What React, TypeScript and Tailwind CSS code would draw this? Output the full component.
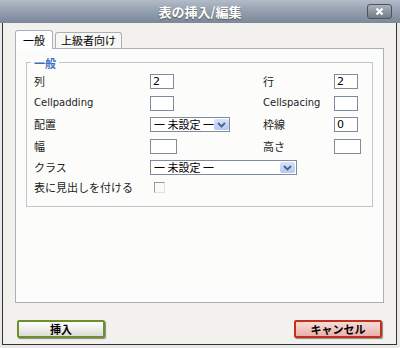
const jp = { fontFamily: '"Noto Sans CJK JP", "Noto Sans", sans-serif' };
const latin = { fontFamily: '"DejaVu Sans", "Liberation Sans", sans-serif' };

function TextBox({ value = "", w = "w-[24px]" }: { value?: string; w?: string }) {
  return (
    <div
      className={`${w} h-[15px] border border-[#7f8b98] bg-white text-[11px] leading-[13px] pl-[2px] text-black`}
      style={latin}
    >
      {value}
    </div>
  );
}

function Select({ w }: { w: string }) {
  return (
    <div className={`${w} h-[15px] border border-[#7f8b98] bg-white flex items-center justify-between overflow-hidden`}>
      <span className="text-[11px] leading-[13px] pl-[3px] text-black whitespace-nowrap" style={jp}>
        一 未設定 一
      </span>
      <span className="shrink-0 w-[15px] h-[11px] mr-[1px] rounded-[2px] bg-gradient-to-b from-[#d7e2fb] to-[#b4c8f4] flex items-center justify-center">
        <svg width="9" height="6" viewBox="0 0 9 6">
          <path d="M1 1 L4.5 4.5 L8 1" fill="none" stroke="#4d6185" strokeWidth="1.8" />
        </svg>
      </span>
    </div>
  );
}

function Label({ children, latinText }: { children: React.ReactNode; latinText?: boolean }) {
  return (
    <span
      className={`${latinText ? "text-[10px]" : "text-[11px]"} text-[#222] leading-none`}
      style={latinText ? latin : jp}
    >
      {children}
    </span>
  );
}

export default function App() {
  return (
    <div className="w-[400px] h-[348px] bg-[#e9e9e9] flex flex-col">
      <div className="h-[23px] bg-gradient-to-b from-[#b3bcc8] via-[#939faf] to-[#7b8899] flex items-center justify-center relative">
        <span
          className="text-white font-bold text-[13px] [text-shadow:0_1px_1px_#555]"
          style={jp}
        >
          表の挿入/編集
        </span>
        <div className="absolute right-[8px] top-[4px] w-[25px] h-[15px] rounded-[3px] border border-[#4a5560] bg-gradient-to-b from-[#aab2bc] to-[#727d89] flex items-center justify-center">
          <svg width="9" height="9" viewBox="0 0 9 9">
            <path d="M1.5 1.5 L7.5 7.5 M7.5 1.5 L1.5 7.5" stroke="white" strokeWidth="2.2" />
          </svg>
        </div>
      </div>
      <div className="flex-1 ml-[2px] mr-[3px] mb-[3px] border-l border-r border-b border-[#333] bg-[#f2f1ed] flex flex-col px-[12px] pt-[7px]">
        <div className="flex items-end h-[18px] relative z-10">
          <div
            className="h-[19px] w-[38px] bg-white border border-[#a6b1bc] border-b-0 rounded-t-[3px] text-[11px] flex items-center justify-center text-black mb-[-1px]"
            style={jp}
          >
            一般
          </div>
          <div
            className="h-[16px] w-[67px] ml-[2px] bg-[#f7f7f4] border border-[#a6b1bc] border-b-0 rounded-t-[3px] text-[11px] flex items-center justify-center text-black"
            style={jp}
          >
            上級者向け
          </div>
        </div>
        <div className="h-[255px] bg-[#fcfdfb] border border-[#a6b1bc] px-[10px] pt-[6px]">
          <div className="relative border border-[#c3c6c9] h-[145px] mt-[7px] px-[7px] pt-[11px]">
            <span
              className="absolute left-[4px] top-[-8px] bg-[#fcfdfb] px-[3px] text-[11px] font-bold text-[#3f6fc4]"
              style={jp}
            >
              一般
            </span>
            <div className="grid grid-cols-[116px_113px_71px_auto] gap-y-[6.5px] items-center">
              <Label>列</Label>
              <TextBox value="2" />
              <Label>行</Label>
              <TextBox value="2" />

              <Label latinText>Cellpadding</Label>
              <TextBox />
              <Label latinText>Cellspacing</Label>
              <TextBox />

              <Label>配置</Label>
              <Select w="w-[80px]" />
              <Label>枠線</Label>
              <TextBox value="0" />

              <Label>幅</Label>
              <TextBox w="w-[27px]" />
              <Label>高さ</Label>
              <TextBox w="w-[27px]" />

              <Label>クラス</Label>
              <div className="col-span-3">
                <Select w="w-[147px]" />
              </div>

              <Label>表に見出しを付ける</Label>
              <div className="col-span-3 pl-[4px]">
                <div className="w-[11px] h-[11px] border-t border-l border-[#999] border-r border-b border-r-[#e0e0e0] border-b-[#e0e0e0] bg-[#fafafa]" />
              </div>
            </div>
          </div>
        </div>
        <div className="flex justify-between mt-[17px] px-[2px]">
          <div
            className="w-[88px] h-[18px] rounded-[2px] border-2 border-[#6f8f2c] bg-gradient-to-b from-[#ffffff] to-[#dcdcd6] flex items-center justify-center text-[11px] font-bold text-black shadow-[1px_1px_1px_#888]"
            style={jp}
          >
            挿入
          </div>
          <div
            className="w-[88px] h-[18px] rounded-[2px] border-2 border-[#c0301c] bg-gradient-to-b from-[#f8dcd8] to-[#eab0aa] flex items-center justify-center text-[11px] font-bold text-black shadow-[1px_1px_1px_#888]"
            style={jp}
          >
            キャンセル
          </div>
        </div>
      </div>
    </div>
  );
}
